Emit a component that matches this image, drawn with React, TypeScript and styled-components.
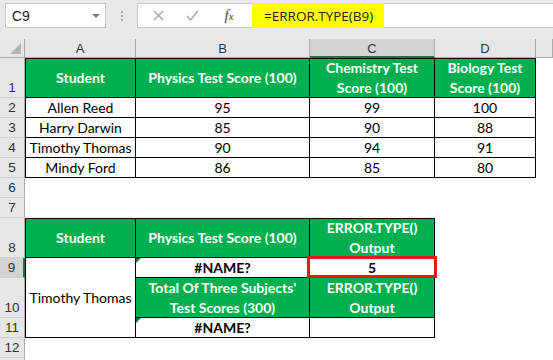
import React from "react";
import styled, { createGlobalStyle, css } from "styled-components";

const Global = createGlobalStyle`
  html, body { margin: 0; padding: 0; background: #ffffff; }
  body { width: 553px; height: 360px; overflow: hidden; }
`;

const Page = styled.div`
  width: 553px;
  height: 360px;
  overflow: hidden;
  display: flex;
  flex-direction: column;
  background: #ffffff;
`;

const Toolbar = styled.div`
  height: 39px;
  flex: none;
  background: #e9e9e9;
  display: flex;
  align-items: flex-start;
  padding: 3px 0 0 5px;
  box-sizing: border-box;
`;

const NameBox = styled.div`
  width: 101px;
  height: 25px;
  box-sizing: border-box;
  background: #fff;
  border: 1px solid #c9c9c9;
  display: flex;
  align-items: center;
  justify-content: space-between;
  padding: 0 5px 0 6px;
  font-family: "Liberation Sans", Arial, sans-serif;
  font-size: 14px;
  color: #222;
`;

const DropArrow = styled.span`
  width: 0;
  height: 0;
  border-left: 4px solid transparent;
  border-right: 4px solid transparent;
  border-top: 4px solid #7a7a7a;
`;

const Dots = styled.div`
  width: 31px;
  height: 25px;
  display: flex;
  flex-direction: column;
  align-items: center;
  justify-content: center;
  gap: 2px;
  & > span {
    width: 2px;
    height: 2px;
    background: #a8a8a8;
  }
`;

const FormulaBox = styled.div`
  flex: 1;
  height: 25px;
  box-sizing: border-box;
  background: #fff;
  border: 1px solid #c9c9c9;
  border-right: none;
  display: flex;
  align-items: stretch;
`;

const IconSlot = styled.div<{ $w: number }>`
  width: ${(p) => p.$w}px;
  display: flex;
  align-items: center;
  justify-content: center;
`;

const Fx = styled.span`
  font-family: "Liberation Serif", "Times New Roman", serif;
  font-style: italic;
  font-size: 15px;
  color: #444;
  & > small {
    font-size: 11px;
  }
`;

const FormulaText = styled.div`
  background: #ffff00;
  display: flex;
  align-items: center;
  padding: 0 11px 0 12px;
  margin: -1px 0;
  font-family: "Open Sans", "Liberation Sans", sans-serif;
  font-size: 13.5px;
  color: #222;
`;

const Sheet = styled.div`
  flex: 1;
  display: grid;
  grid-template-columns: 25px 111px 174px 125px 101px 1fr;
  grid-template-rows: 19px 40px 20px 20px 20px 20px 20px 20px 40px 20px 40px 20px 20px 20px;
  font-family: Lato, "Open Sans", sans-serif;
`;

const Corner = styled.div`
  grid-row: 1;
  grid-column: 1;
  background: #e6e6e6;
  border-right: 1px solid #ababab;
  border-bottom: 1px solid #ababab;
  box-sizing: border-box;
  position: relative;
  &::after {
    content: "";
    position: absolute;
    right: 3px;
    bottom: 3px;
    width: 0;
    height: 0;
    border-left: 11px solid transparent;
    border-bottom: 11px solid #b5b5b5;
  }
`;

const ColHead = styled.div<{ $col: number; $active?: boolean }>`
  grid-row: 1;
  grid-column: ${(p) => p.$col};
  box-sizing: border-box;
  background: ${(p) => (p.$active ? "#d3d3d3" : "#e6e6e6")};
  border-right: 1px solid #ababab;
  border-bottom: ${(p) => (p.$active ? "2px solid #217346" : "1px solid #ababab")};
  display: flex;
  align-items: center;
  justify-content: center;
  font-family: "Liberation Sans", Arial, sans-serif;
  font-size: 13px;
  color: #333;
  padding-top: 1px;
`;

const RowHead = styled.div<{ $row: number; $active?: boolean }>`
  grid-row: ${(p) => p.$row};
  grid-column: 1;
  box-sizing: border-box;
  background: ${(p) => (p.$active ? "#d3d3d3" : "#e6e6e6")};
  border-right: ${(p) => (p.$active ? "2px solid #217346" : "1px solid #ababab")};
  border-bottom: 1px solid #cfcfcf;
  display: flex;
  align-items: flex-end;
  justify-content: center;
  padding-bottom: 1px;
  font-family: "Liberation Sans", Arial, sans-serif;
  font-size: 13.5px;
  line-height: 16px;
  color: #333;
`;

type Kind = "head" | "body";

const Cell = styled.div<{
  $row: number;
  $col: number;
  $rows?: number;
  $kind: Kind;
  $bold?: boolean;
  $top?: boolean;
  $left?: boolean;
}>`
  grid-row: ${(p) => p.$row} / span ${(p) => p.$rows ?? 1};
  grid-column: ${(p) => p.$col};
  box-sizing: border-box;
  position: relative;
  display: flex;
  align-items: center;
  justify-content: center;
  text-align: center;
  font-size: 14px;
  line-height: 20px;
  border-right: 1px solid #000;
  border-bottom: 1px solid #000;
  ${(p) => p.$top && css`border-top: 1px solid #000;`}
  ${(p) => p.$left && css`border-left: 1px solid #000;`}
  ${(p) =>
    p.$kind === "head"
      ? css`
          background: #00b050;
          color: #ffffff;
          font-weight: 700;
        `
      : css`
          background: #ffffff;
          color: #000000;
          font-weight: ${p.$bold ? 700 : 400};
        `}
`;

const ErrorMark = styled.span`
  position: absolute;
  left: 0;
  top: 0;
  width: 0;
  height: 0;
  border-top: 5px solid #1e7145;
  border-right: 5px solid transparent;
`;

const Highlight = styled.span`
  position: absolute;
  left: -3px;
  right: -3px;
  top: -2px;
  bottom: -1px;
  border: 3px solid #e01b1b;
  pointer-events: none;
`;

const cols = ["A", "B", "C", "D"];

const table1 = [
  ["Allen Reed", "95", "99", "100"],
  ["Harry Darwin", "85", "90", "88"],
  ["Timothy Thomas", "90", "94", "91"],
  ["Mindy Ford", "86", "85", "80"],
];

const header1 = [
  "Student",
  "Physics Test Score (100)",
  <>Chemistry Test<br />Score (100)</>,
  <>Biology Test<br />Score (100)</>,
];

const rowNumbers = [1, 2, 3, 4, 5, 6, 7, 8, 9, 10, 11, 12, 13];

export default function App() {
  return (
    <Page>
      <Global />
      <Toolbar>
        <NameBox>
          <span>C9</span>
          <DropArrow />
        </NameBox>
        <Dots>
          <span />
          <span />
          <span />
        </Dots>
        <FormulaBox>
          <IconSlot $w={40}>
            <svg width="11" height="11" viewBox="0 0 11 11">
              <path d="M1 1 L10 10 M10 1 L1 10" stroke="#a3a3a3" strokeWidth="1.3" fill="none" />
            </svg>
          </IconSlot>
          <IconSlot $w={28}>
            <svg width="13" height="11" viewBox="0 0 13 11">
              <path d="M1 6 L4.5 10 L12 1" stroke="#a3a3a3" strokeWidth="1.3" fill="none" />
            </svg>
          </IconSlot>
          <IconSlot $w={46}>
            <Fx>
              f<small>x</small>
            </Fx>
          </IconSlot>
          <FormulaText>=ERROR.TYPE(B9)</FormulaText>
        </FormulaBox>
      </Toolbar>
      <Sheet>
        <Corner />
        {cols.map((c, i) => (
          <ColHead key={c} $col={i + 2} $active={c === "C"}>
            {c}
          </ColHead>
        ))}
        <ColHead $col={6} />
        {rowNumbers.map((n) => (
          <RowHead key={n} $row={n + 1} $active={n === 9}>
            {n < 13 ? n : ""}
          </RowHead>
        ))}

        {header1.map((h, i) => (
          <Cell key={i} $row={2} $col={i + 2} $kind="head" $top $left={i === 0}>
            <span>{h}</span>
          </Cell>
        ))}
        {table1.map((r, ri) =>
          r.map((v, ci) => (
            <Cell key={`${ri}-${ci}`} $row={ri + 3} $col={ci + 2} $kind="body" $left={ci === 0}>
              {v}
            </Cell>
          ))
        )}

        <Cell $row={9} $col={2} $kind="head" $top $left>
          Student
        </Cell>
        <Cell $row={9} $col={3} $kind="head" $top>
          Physics Test Score (100)
        </Cell>
        <Cell $row={9} $col={4} $kind="head" $top>
          <span>
            ERROR.TYPE()
            <br />
            Output
          </span>
        </Cell>
        <Cell $row={10} $rows={3} $col={2} $kind="body" $left>
          Timothy Thomas
        </Cell>
        <Cell $row={10} $col={3} $kind="body" $bold>
          <ErrorMark />
          #NAME?
        </Cell>
        <Cell $row={10} $col={4} $kind="body" $bold>
          5
          <Highlight />
        </Cell>
        <Cell $row={11} $col={3} $kind="head">
          <span>
            Total Of Three Subjects'
            <br />
            Test Scores (300)
          </span>
        </Cell>
        <Cell $row={11} $col={4} $kind="head">
          <span>
            ERROR.TYPE()
            <br />
            Output
          </span>
        </Cell>
        <Cell $row={12} $col={3} $kind="body" $bold>
          <ErrorMark />
          #NAME?
        </Cell>
        <Cell $row={12} $col={4} $kind="body" />
      </Sheet>
    </Page>
  );
}
